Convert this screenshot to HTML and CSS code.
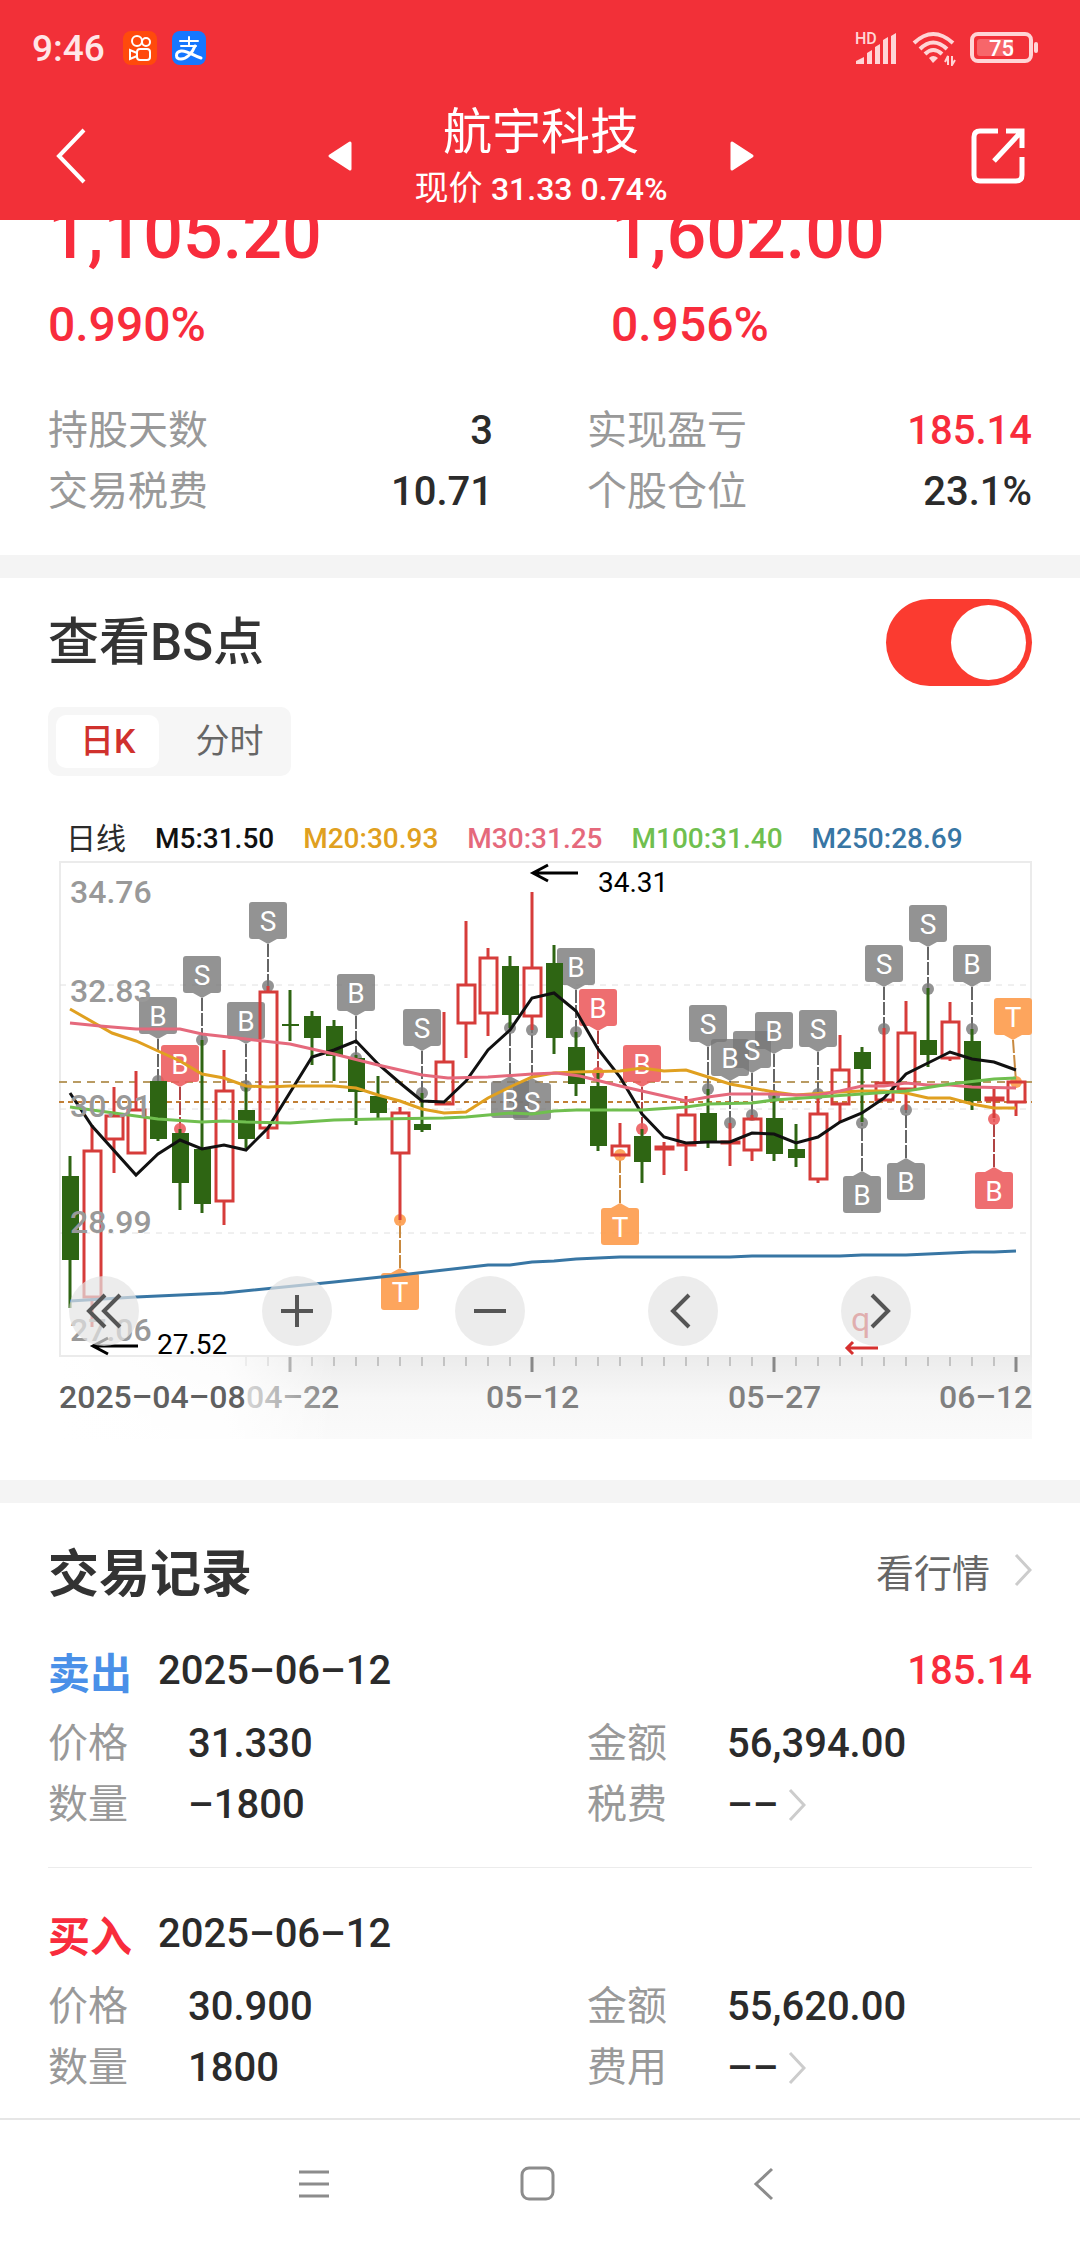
FILE: index.html
```html
<!DOCTYPE html>
<html lang="zh-CN">

<head>
    <meta charset="UTF-8">
    <meta name="viewport" content="width=device-width, initial-scale=1.0">
    <title>航宇科技</title>
    <link rel="stylesheet" href="styles.css">
</head>

<body>

    <header class="header">
        <div class="status">
            <span class="clock">9:46</span>
            <svg class="app-icon" viewBox="0 0 34 34" width="34" height="34">
                <rect width="34" height="34" rx="8" fill="#ff4a0c" />
                <g fill="none" stroke="#fff" stroke-width="2">
                    <circle cx="14" cy="10" r="5" />
                    <circle cx="23" cy="11" r="4" />
                    <rect x="14" y="18" width="13" height="11" rx="3" />
                    <path d="M14 22 L7 19 V28 L14 25" />
                </g>
            </svg>
            <svg class="app-icon" viewBox="0 0 34 34" width="34" height="34">
                <rect width="34" height="34" rx="8" fill="#1677ff" />
                <g fill="none" stroke="#fff" stroke-width="2" stroke-linecap="round">
                    <path d="M8 10 H26 M17 6 V15 M9 15 H24" />
                    <path d="M23 15 C20 23 14 28 9 28 C3 28 3 21 9 20 C15 19 22 25 29 27" stroke-width="3" />
                </g>
            </svg>
            <div class="status-right">
                <svg viewBox="0 0 44 36" width="44" height="36" fill="#ffd5d6">
                    <text x="1" y="14" font-size="16" font-weight="500">HD</text>
                    <path d="M2 34 V31 L10 27 V34 Z M13 34 V23 L18 20 V34 Z M21 34 V17 L26 14 V34 Z M29 34 V10 L34 7 V34 Z M37 34 V6 L42 3 V34 Z" />
                </svg>
                <svg viewBox="0 0 44 36" width="44" height="36">
                    <g fill="none" stroke="#ffd5d6" stroke-width="4">
                        <path d="M2 13 Q21 -5 41 13" />
                        <path d="M8 19 Q21 6 35 19" />
                        <path d="M13 24 Q21 16 30 24" />
                    </g>
                    <path d="M17 28 Q21 24 26 28 L21 33 Z" fill="#ffd5d6" />
                    <path d="M36 35 V26 L33 32 M40 26 V35 L43 30" fill="none" stroke="#ffd5d6" stroke-width="2" />
                </svg>
                <svg viewBox="0 0 70 32" width="70" height="32">
                    <rect x="2" y="2" width="59" height="27" rx="6" fill="none" stroke="#ffd5d6" stroke-width="4" />
                    <rect x="7" y="7" width="36" height="17" rx="3" fill="#f7666a" />
                    <rect x="64" y="10" width="4" height="11" rx="2" fill="#ffd5d6" />
                    <text x="19" y="24" font-size="22" font-weight="500" fill="#fff">75</text>
                </svg>
            </div>
        </div>
        <div class="nav">
            <button type="button" class="icon-button" aria-label="返回">
                <svg viewBox="0 0 30 56" width="30" height="56"><path d="M28 2 L3 28 L28 54" fill="none" stroke="#fff" stroke-width="4" /></svg>
            </button>
            <div class="stock">
                <button type="button" class="icon-button" aria-label="上一只">
                    <svg viewBox="0 0 24 30" width="24" height="30"><path d="M2 15 L22 2 V28 Z" fill="#fff" stroke="#fff" stroke-width="3" stroke-linejoin="round" /></svg>
                </button>
                <div>
                    <h1>航宇科技</h1>
                    <p class="stock-price">现价 <span>31.33 0.74%</span></p>
                </div>
                <button type="button" class="icon-button" aria-label="下一只">
                    <svg viewBox="0 0 24 30" width="24" height="30"><path d="M22 15 L2 2 V28 Z" fill="#fff" stroke="#fff" stroke-width="3" stroke-linejoin="round" /></svg>
                </button>
            </div>
            <button type="button" class="icon-button share" aria-label="分享">
                <svg viewBox="0 0 56 58" width="56" height="58" fill="none" stroke="#fff" stroke-width="5">
                    <path d="M28 4 H10 Q4 4 4 10 V48 Q4 54 10 54 H46 Q52 54 52 48 V30" />
                    <path d="M36 4 H52 V21 M52 4 L24 34" />
                </svg>
            </button>
        </div>
    </header>

    <main>
        <section class="summary">
            <div class="totals">
                <div>
                    <p class="amount">1,105.20</p>
                    <p class="percent">0.990%</p>
                </div>
                <div class="total-right">
                    <p class="amount">1,602.00</p>
                    <p class="percent">0.956%</p>
                </div>
            </div>
            <dl class="stats">
                <div class="stat"><dt>持股天数</dt><dd>3</dd></div>
                <div class="stat"><dt>实现盈亏</dt><dd class="red">185.14</dd></div>
                <div class="stat"><dt>交易税费</dt><dd>10.71</dd></div>
                <div class="stat"><dt>个股仓位</dt><dd>23.1%</dd></div>
            </dl>
        </section>

        <section class="points">
            <div class="points-head">
                <label for="bsSwitch">查看BS点</label>
                <input type="checkbox" id="bsSwitch" class="switch" checked>
            </div>
            <div class="tabs">
                <button type="button" class="tab active">日K</button>
                <button type="button" class="tab">分时</button>
            </div>
            <div class="legend">
                <span class="legend-name">日线</span>
                <span class="m5">M5:31.50</span>
                <span class="m20">M20:30.93</span>
                <span class="m30">M30:31.25</span>
                <span class="m100">M100:31.40</span>
                <span class="m250">M250:28.69</span>
            </div>
            <div class="chart">
                <svg id="kline" viewBox="59 861 973 579"></svg>
                <div class="chart-buttons">
                    <button type="button" aria-label="最早">
                        <svg viewBox="0 0 36 36" width="36" height="36"><path d="M19 2 L3 18 L19 34 M34 2 L18 18 L34 34" /></svg>
                    </button>
                    <button type="button" aria-label="放大">
                        <svg viewBox="0 0 36 36" width="36" height="36"><path d="M2 18 H34 M18 2 V34" /></svg>
                    </button>
                    <button type="button" aria-label="缩小">
                        <svg viewBox="0 0 36 36" width="36" height="36"><path d="M2 18 H34" /></svg>
                    </button>
                    <button type="button" aria-label="向左">
                        <svg viewBox="0 0 36 36" width="36" height="36"><path d="M24 2 L8 18 L24 34" /></svg>
                    </button>
                    <button type="button" aria-label="向右">
                        <svg viewBox="0 0 36 36" width="36" height="36"><path d="M14 2 L30 18 L14 34" /></svg>
                    </button>
                </div>
            </div>
        </section>

        <section class="records">
            <div class="records-head">
                <h2>交易记录</h2>
                <a href="#quote">看行情
                    <svg class="arrow" viewBox="0 0 18 34" width="18" height="34"><path d="M2 2 L16 17 L2 32" /></svg>
                </a>
            </div>

            <article class="record">
                <div class="record-head">
                    <strong class="blue">卖出</strong>
                    <time>2025–06–12</time>
                    <span class="profit">185.14</span>
                </div>
                <dl class="fields">
                    <div class="field"><dt>价格</dt><dd>31.330</dd></div>
                    <div class="field"><dt>金额</dt><dd>56,394.00</dd></div>
                    <div class="field"><dt>数量</dt><dd>–1800</dd></div>
                    <div class="field"><dt>税费</dt><dd><a href="#tax">––
                        <svg class="arrow" viewBox="0 0 18 34" width="18" height="34"><path d="M2 2 L16 17 L2 32" /></svg></a></dd></div>
                </dl>
            </article>

            <article class="record">
                <div class="record-head">
                    <strong class="red">买入</strong>
                    <time>2025–06–12</time>
                </div>
                <dl class="fields">
                    <div class="field"><dt>价格</dt><dd>30.900</dd></div>
                    <div class="field"><dt>金额</dt><dd>55,620.00</dd></div>
                    <div class="field"><dt>数量</dt><dd>1800</dd></div>
                    <div class="field"><dt>费用</dt><dd><a href="#fee">––
                        <svg class="arrow" viewBox="0 0 18 34" width="18" height="34"><path d="M2 2 L16 17 L2 32" /></svg></a></dd></div>
                </dl>
            </article>
        </section>
    </main>

    <nav class="system-bar">
        <button type="button" aria-label="菜单">
            <svg viewBox="0 0 40 40" width="40" height="40"><path d="M4 8 H34 M4 20 H34 M4 32 H34" /></svg>
        </button>
        <button type="button" aria-label="主页">
            <svg viewBox="0 0 40 40" width="40" height="40"><rect x="2" y="4" width="31" height="31" rx="7" /></svg>
        </button>
        <button type="button" aria-label="后退">
            <svg viewBox="0 0 40 40" width="40" height="40"><path d="M27 5 L11 20 L27 35" /></svg>
        </button>
    </nav>

    <script src="kline.js"></script>

</body>

</html>
```
FILE: styles.css
```css
* {
    box-sizing: border-box;
    margin: 0;
    padding: 0;
}

body {
    font-family: Roboto, "Noto Sans CJK SC", sans-serif;
    color: #2b2b2b;
    background-color: #fff;
    min-height: 100vh;
    display: flex;
    flex-direction: column;
}

button {
    font-family: inherit;
    border: none;
    background: none;
    cursor: pointer;
}

a {
    color: inherit;
    text-decoration: none;
}

svg {
    display: block;
}

.red {
    color: #f82c3c;
}

.blue {
    color: #4a90e8;
}

/* Cabecera */
.header {
    position: relative;
    z-index: 1;
    color: #fff;
    background-color: #f23038;
}

.status {
    display: flex;
    align-items: center;
    gap: 15px;
    height: 96px;
    padding: 0 40px 0 32px;
}

.clock {
    margin-right: 3px;
    font-size: 37px;
    font-weight: 500;
    color: #ffe6e7;
}

.status-right {
    display: flex;
    align-items: center;
    gap: 14px;
    margin-left: auto;
}

.nav {
    display: grid;
    grid-template-columns: 1fr auto 1fr;
    align-items: center;
    height: 124px;
    padding: 0 54px 4px 56px;
}

.stock {
    display: flex;
    align-items: center;
    gap: 62px;
    text-align: center;
}

.share {
    justify-self: end;
}

.nav > .icon-button:first-child {
    justify-self: start;
}

h1 {
    font-size: 49px;
    font-weight: 400;
    line-height: 64px;
}

.stock-price {
    font-size: 34px;
    line-height: 46px;
}

.stock-price span {
    font-size: 32px;
    font-weight: 500;
}

/* Resumen */
.summary {
    margin-top: -27px;
    padding: 0 48px 33px;
    border-bottom: 23px solid #f4f4f4;
}

.totals,
.stats,
.fields {
    display: grid;
    grid-template-columns: 1fr 1fr;
    column-gap: 94px;
}

.total-right {
    padding-left: 24px;
}

.amount {
    font-size: 70px;
    font-weight: 500;
    line-height: 82px;
    color: #f82c3c;
}

.percent {
    margin-top: 22px;
    font-size: 48px;
    font-weight: 500;
    line-height: 56px;
    color: #f82c3c;
}

.stats {
    margin-top: 47px;
}

.stat,
.field {
    display: flex;
    font-size: 40px;
    line-height: 61px;
}

.stat {
    justify-content: space-between;
}

dt {
    color: #999;
}

dd {
    font-weight: 500;
}

/* Puntos BS */
.points {
    padding: 21px 48px 40px;
    border-bottom: 23px solid #f4f4f4;
}

.points-head {
    display: flex;
    align-items: center;
    justify-content: space-between;
}

.points-head label {
    font-size: 51px;
    font-weight: 500;
    line-height: 62px;
    color: #333;
}

.switch {
    appearance: none;
    width: 146px;
    height: 87px;
    padding: 6px;
    border-radius: 44px;
    background-color: #ccc;
    cursor: pointer;
}

.switch::before {
    content: "";
    display: block;
    width: 75px;
    height: 75px;
    border-radius: 50%;
    background-color: #fff;
}

.switch:checked {
    background-color: #fb3b30;
}

.switch:checked::before {
    margin-left: auto;
}

.tabs {
    display: flex;
    width: fit-content;
    margin-top: 21px;
    padding: 8px;
    border-radius: 10px;
    background-color: #f6f6f6;
}

.tab {
    padding: 0 24px;
    border-radius: 10px;
    font-size: 34px;
    line-height: 53px;
    color: #666;
}

.tab + .tab {
    padding: 0 20px 0 36px;
}

.tab.active {
    font-weight: 500;
    color: #d0312d;
    background-color: #fff;
}

.legend {
    display: flex;
    gap: 29px;
    margin-top: 40px;
    padding-left: 18px;
    font-size: 28px;
    font-weight: 500;
    line-height: 45px;
    white-space: nowrap;
}

.legend-name {
    font-size: 30px;
    font-weight: 400;
}

.m5 { color: #111; }
.m20 { color: #e0a020; }
.m30 { color: #e5697c; }
.m100 { color: #70bf4f; }
.m250 { color: #3876a4; }

.chart {
    position: relative;
    margin-left: 11px;
}

#kline {
    width: 100%;
}

.chart-buttons {
    position: absolute;
    left: 10px;
    right: 121px;
    bottom: 94px;
    display: flex;
    justify-content: space-between;
}

.chart-buttons button {
    display: flex;
    align-items: center;
    justify-content: center;
    width: 70px;
    height: 70px;
    border-radius: 50%;
    background-color: rgba(228, 228, 228, 0.7);
}

.chart-buttons path {
    fill: none;
    stroke: #555;
    stroke-width: 4;
}

/* Registros */
.records {
    padding: 36px 48px 0;
}

.records-head {
    display: flex;
    align-items: center;
    justify-content: space-between;
    height: 62px;
    margin-bottom: 4px;
}

h2 {
    font-size: 51px;
    font-weight: 700;
    color: #333;
}

.records-head a,
.field a {
    display: flex;
    align-items: center;
}

.records-head a {
    gap: 24px;
    font-size: 38px;
    color: #666;
}

.field a {
    gap: 10px;
}

.arrow path {
    fill: none;
    stroke: #ccc;
    stroke-width: 3;
}

.record {
    padding: 36px 0 32px;
    border-bottom: 1px solid #ececec;
}

.record:last-child {
    padding-bottom: 20px;
    border-bottom: none;
}

.record-head {
    display: flex;
    align-items: center;
    gap: 26px;
    height: 58px;
    margin-bottom: 14px;
    font-size: 40px;
    font-weight: 500;
}

.record-head strong {
    font-size: 42px;
    font-weight: 700;
}

.profit {
    margin-left: auto;
    color: #f82c3c;
}

.field dt {
    width: 140px;
}

/* Barra del sistema */
.system-bar {
    display: flex;
    align-items: center;
    justify-content: center;
    gap: 185px;
    height: 130px;
    margin-top: auto;
    border-top: 2px solid #e6e6e6;
}

.system-bar svg {
    fill: none;
    stroke: #8c8c8c;
    stroke-width: 3;
}

/* Gráfico */
.frame { fill: none; stroke: #ebebeb; stroke-width: 2; }
.grid { stroke: #e0e0e0; stroke-dasharray: 6 6; }
.price-line { stroke: #b99b62; stroke-width: 2; stroke-dasharray: 8 6; }
.cost-line { stroke: #c17f35; stroke-width: 2; stroke-dasharray: 5 4; }
.up { fill: none; stroke: #d63c3a; stroke-width: 3; }
.down { fill: #2e6513; stroke: none; }
.down-wick { stroke: #2e6513; stroke-width: 3; }
.ma { fill: none; stroke-width: 3; }
.axis-price { font-size: 32px; font-weight: 500; fill: #999; }
.axis-date { font-size: 32px; font-weight: 500; fill: #808080; }
.axis-date.first { fill: #606060; }
.extreme { font-size: 28px; fill: #000; }
.extreme-arrow { fill: none; stroke: #000; stroke-width: 3; }
.mark-text { font-size: 28px; fill: #fff; text-anchor: middle; }
.tick { stroke: #999; }
.tick-major { stroke: #888; stroke-width: 3; }
.rights { font-size: 34px; fill: #d6302f; }
.rights-arrow { fill: none; stroke: #d6302f; stroke-width: 3; }
```
FILE: kline.js
```js
var svg = document.getElementById('kline');
var STEP = 22;
var FIRST_X = 70;

// tipo, máximo, techo del cuerpo, base del cuerpo, mínimo
var velas = [
    ['G', 1156, 1176, 1260, 1308], ['R', 1125, 1150, 1298, 1327], ['R', 1087, 1115, 1140, 1173], ['R', 1071, 1109, 1154, 1154],
    ['G', 1081, 1081, 1139, 1141], ['G', 1129, 1133, 1183, 1210], ['G', 1040, 1149, 1204, 1213], ['R', 1050, 1090, 1202, 1225],
    ['G', 1086, 1110, 1139, 1148], ['R', 986, 991, 1129, 1139], ['G', 990, 1024, 1026, 1041], ['G', 1011, 1016, 1038, 1065],
    ['G', 1020, 1026, 1056, 1081], ['G', 1055, 1058, 1092, 1125], ['G', 1076, 1096, 1113, 1118], ['R', 1107, 1112, 1154, 1220],
    ['G', 1093, 1124, 1130, 1132], ['R', 1012, 1061, 1105, 1105], ['R', 921, 984, 1024, 1058], ['R', 948, 957, 1014, 1036],
    ['G', 956, 966, 1015, 1028], ['R', 892, 967, 1017, 1030], ['G', 945, 963, 1038, 1054], ['G', 1032, 1047, 1084, 1096],
    ['G', 1072, 1086, 1146, 1151], ['R', 1123, 1145, 1156, 1156], ['G', 1129, 1136, 1162, 1183], ['R', 1142, 1146, 1150, 1175],
    ['R', 1096, 1114, 1146, 1171], ['G', 1089, 1113, 1142, 1148], ['R', 1123, 1141, 1144, 1166], ['R', 1115, 1118, 1151, 1161],
    ['G', 1096, 1118, 1154, 1161], ['G', 1124, 1149, 1158, 1167], ['R', 1093, 1113, 1180, 1183], ['R', 1035, 1069, 1105, 1122],
    ['G', 1047, 1052, 1069, 1122], ['R', 1028, 1082, 1101, 1101], ['R', 1001, 1032, 1090, 1110], ['G', 988, 1040, 1055, 1067],
    ['R', 1002, 1021, 1059, 1061], ['G', 1029, 1041, 1101, 1110], ['R', 1089, 1097, 1101, 1118], ['R', 1081, 1081, 1103, 1116]
];

// vela, letra, color, altura del punto, etiqueta debajo
var marcas = [
    [4, 'B', 'gris', 1081], [5, 'B', 'rojo', 1129], [6, 'S', 'gris', 1040], [8, 'B', 'gris', 1086], [9, 'S', 'gris', 986],
    [13, 'B', 'gris', 1058], [15, 'T', 'naranja', 1220, true], [16, 'S', 'gris', 1093], [20, 'B', 'gris', 1028, true],
    [21, 'S', 'gris', 1030, true], [23, 'B', 'gris', 1032], [24, 'B', 'rojo', 1073], [25, 'T', 'naranja', 1155, true],
    [26, 'B', 'rojo', 1129], [29, 'S', 'gris', 1089], [32, 'B', 'gris', 1096], [31, 'S', 'gris', 1115], [30, 'B', 'gris', 1123],
    [34, 'S', 'gris', 1094], [36, 'B', 'gris', 1123, true], [37, 'S', 'gris', 1029], [38, 'B', 'gris', 1110, true],
    [39, 'S', 'gris', 989], [41, 'B', 'gris', 1029], [42, 'B', 'rojo', 1119, true], [43, 'T', 'naranja', 1082]
];

var colores = {
    gris: ['rgba(120, 120, 120, 0.8)', '#666'],
    rojo: ['rgba(236, 90, 92, 0.88)', '#b04444'],
    naranja: ['rgba(253, 155, 75, 0.9)', '#c8893f']
};

var medias = [
    ['#3876a4', '70,1301 136,1297 224,1293 334,1282 400,1275 488,1265 510,1265 532,1262 554,1261 576,1259 620,1257 730,1257 752,1256 840,1256 862,1255 906,1255 972,1252 994,1252 1016,1251'],
    ['#111', '70,1093 92,1126 136,1175 158,1154 180,1140 202,1149 224,1145 246,1150 268,1128 312,1057 334,1050 356,1041 378,1064 400,1083 422,1101 444,1102 466,1081 488,1050 510,1030 532,998 554,993 576,1011 598,1049 620,1077 642,1114 664,1137 686,1143 708,1142 730,1142 752,1133 774,1134 796,1143 818,1137 840,1122 862,1113 884,1098 906,1074 928,1063 950,1052 972,1059 994,1062 1016,1070'],
    ['#e0a020', '70,1009 112,1033 136,1041 158,1051 180,1061 202,1074 224,1078 246,1086 268,1087 290,1086 334,1086 356,1088 378,1095 400,1101 422,1109 444,1113 466,1112 488,1098 510,1087 532,1077 554,1073 576,1072 620,1071 642,1068 664,1071 686,1070 708,1077 730,1084 774,1092 796,1095 840,1092 862,1091 884,1091 906,1093 928,1098 950,1098 972,1104 994,1108 1016,1108'],
    ['#e5697c', '70,1023 100,1026 136,1029 180,1029 202,1034 246,1039 290,1044 334,1054 378,1065 422,1075 448,1078 488,1077 532,1074 556,1073 580,1076 620,1086 642,1091 686,1101 708,1097 730,1094 774,1094 796,1095 818,1095 840,1091 862,1086 884,1086 906,1083 928,1085 950,1085 972,1087 1016,1088'],
    ['#70bf4f', '70,1107 114,1113 158,1119 202,1122 224,1121 246,1122 290,1123 334,1120 378,1119 444,1118 466,1117 510,1113 532,1114 554,1111 576,1110 642,1110 686,1107 708,1104 752,1103 774,1100 818,1097 862,1094 906,1091 950,1084 994,1079 1016,1078']
];

var html = '';

function linea(clase, x1, y1, x2, y2) {
    html += '<line class="' + clase + '" x1="' + x1 + '" y1="' + y1 + '" x2="' + x2 + '" y2="' + y2 + '"/>';
}

function texto(clase, x, y, valor) {
    html += '<text class="' + clase + '" x="' + x + '" y="' + y + '">' + valor + '</text>';
}

// Fondo del eje de fechas
html += '<defs><linearGradient id="ejeFondo" x2="0" y2="1"><stop offset="0" stop-color="#ececec"/><stop offset="0.5" stop-color="#f7f7f7"/><stop offset="1" stop-color="#fafafa"/></linearGradient>' +
    '<linearGradient id="ejeVelo"><stop offset="0" stop-color="#fff"/><stop offset="0.6" stop-color="#fff" stop-opacity="0.85"/><stop offset="1" stop-color="#fff" stop-opacity="0"/></linearGradient></defs>';
html += '<rect x="59" y="1357" width="973" height="82" fill="url(#ejeFondo)"/>';
html += '<rect class="frame" x="60" y="862" width="971" height="494"/>';

linea('grid', 60, 985, 1031, 985);
linea('grid', 60, 1109, 1031, 1109);
linea('grid', 60, 1233, 1031, 1233);
linea('price-line', 59, 1082, 1032, 1082);
linea('cost-line', 59, 1102, 1032, 1102);

function posicion(m) {
    var x = FIRST_X + m[0] * STEP;
    return { x: x, cx: Math.min(x, 1013), y: m[4] ? m[3] + 53 : m[3] - 84 };
}

// Marcas de compra y venta
marcas.forEach(function (m) {
    var p = posicion(m);
    var color = colores[m[2]];
    var borde = m[4] ? p.y : p.y + 37;
    var punta = m[4] ? p.y - 5 : p.y + 42;
    html += '<line x1="' + p.cx + '" y1="' + punta + '" x2="' + p.x + '" y2="' + m[3] + '" stroke="' + color[1] + '" stroke-width="2" stroke-dasharray="13 2"/>';
    html += '<circle cx="' + p.x + '" cy="' + m[3] + '" r="6" fill="' + color[0] + '"/>';
    html += '<rect x="' + (p.cx - 19) + '" y="' + p.y + '" width="38" height="37" rx="3" fill="' + color[0] + '"/>';
    html += '<path d="M' + (p.cx - 9) + ' ' + borde + ' H' + (p.cx + 9) + ' L' + p.cx + ' ' + punta + ' Z" fill="' + color[0] + '"/>';
});

// Las letras van encima de todas las etiquetas
marcas.forEach(function (m) {
    var p = posicion(m);
    texto('mark-text', p.cx, p.y + 29, m[1]);
});

// Velas
velas.forEach(function (v, i) {
    var x = FIRST_X + i * STEP;
    if (v[0] === 'R') {
        html += '<path class="up" d="M' + x + ' ' + v[1] + ' V' + v[2] + ' M' + x + ' ' + v[3] + ' V' + v[4] + '"/>';
        html += '<rect class="up" x="' + (x - 8) + '" y="' + (v[2] + 1) + '" width="17" height="' + (v[3] - v[2] - 2) + '"/>';
    } else {
        linea('down-wick', x, v[1], x, v[4]);
        html += '<rect class="down" x="' + (x - 8) + '" y="' + v[2] + '" width="17" height="' + (v[3] - v[2]) + '"/>';
    }
});

medias.forEach(function (m) {
    html += '<polyline class="ma" stroke="' + m[0] + '" points="' + m[1] + '"/>';
});

texto('axis-price', 70, 903, '34.76');
texto('axis-price', 70, 1002, '32.83');
texto('axis-price', 70, 1117, '30.91');
texto('axis-price', 70, 1233, '28.99');
texto('axis-price', 70, 1341, '27.06');

html += '<path class="extreme-arrow" d="M578 873 H533 M548 865 L533 873 L548 881"/>';
texto('extreme', 598, 892, '34.31');
html += '<path class="extreme-arrow" d="M138 1346 H93 M108 1338 L93 1346 L108 1354"/>';
texto('extreme', 157, 1354, '27.52');

texto('rights', 851, 1331, 'q');
html += '<path class="rights-arrow" d="M878 1348 H848 M853 1342 L847 1348 L853 1354"/>';

// Eje de fechas
for (var i = 8; i < 44; i++) {
    var x = FIRST_X + i * STEP;
    if (i % 11 === 10) {
        linea('tick-major', x, 1357, x, 1372);
    } else {
        linea('tick', x, 1357, x, 1366);
    }
}
texto('axis-date', 246, 1408, '04–22');
html += '<rect x="59" y="1357" width="277" height="83" fill="url(#ejeVelo)"/>';
texto('axis-date first', 59, 1408, '2025–04–08');
texto('axis-date', 486, 1408, '05–12');
texto('axis-date', 728, 1408, '05–27');
texto('axis-date', 939, 1408, '06–12');

svg.innerHTML = html;
```
